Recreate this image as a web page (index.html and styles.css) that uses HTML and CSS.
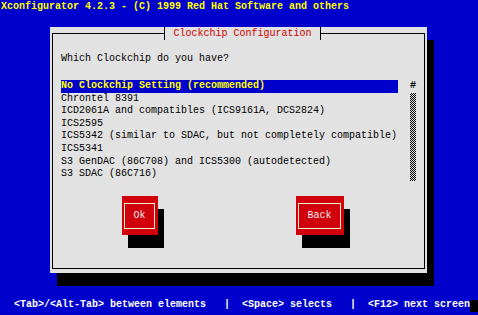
FILE: index.html
```html
<!DOCTYPE html>
<html lang="en">
<head>
  <meta charset="UTF-8" />
  <meta name="viewport" content="width=device-width, initial-scale=1.0"/>
  <title>Xconfigurator</title>
  <link rel="stylesheet" href="styles.css">
</head>
<body>
<header class="topline">Xconfigurator 4.2.3 - (C) 1999 Red Hat Software and others</header>

<div class="dialog">
  <fieldset class="frame">
    <legend>Clockchip Configuration</legend>
    <p class="question">Which Clockchip do you have?</p>
    <div class="listbox">
      <ul class="items">
        <li class="current">No Clockchip Setting (recommended)</li>
        <li>Chrontel 8391</li>
        <li>ICD2061A and compatibles (ICS9161A, DCS2824)</li>
        <li>ICS2595</li>
        <li>ICS5342 (similar to SDAC, but not completely compatible)</li>
        <li>ICS5341</li>
        <li>S3 GenDAC (86C708) and ICS5300 (autodetected)</li>
        <li>S3 SDAC (86C716)</li>
      </ul>
      <div class="scroll">
        <span class="thumb">#</span>
        <div class="track"></div>
      </div>
    </div>
    <div class="buttons">
      <button class="btn ok"><span>Ok</span></button>
      <button class="btn back"><span>Back</span></button>
    </div>
  </fieldset>
</div>

<footer class="helpline">&lt;Tab&gt;/&lt;Alt-Tab&gt; between elements   |  &lt;Space&gt; selects   |  &lt;F12&gt; next screen<span class="cursor"></span></footer>
</body>
</html>
```

FILE: styles.css
```css
html, body { margin: 0; }
body { width: 478px; height: 315px; overflow: hidden; background: #0000cc; font-family: "Liberation Mono", "DejaVu Sans Mono", monospace; font-size: 10px; line-height: 12.6px; display: flex; flex-direction: column; }

.topline { height: 13px; line-height: 13px; padding-left: 1px; color: #ffff00; font-weight: bold; white-space: pre; }

.dialog { width: 373px; height: 242px; margin: 14px 0 0 50px; padding: 0 2px 4px; background: #e2e2e2; box-shadow: 7px 13px 0 #000; }
.frame { box-sizing: border-box; height: 100%; min-width: 0; margin: 0; padding: 13px 0 0 8px; border: 1px solid #000; }
.frame legend { margin: 0 auto; padding: 0 8px; height: 13px; line-height: 13px; border-left: 1px solid #000; border-right: 1px solid #000; color: #d00000; white-space: pre; }

.question { margin: 0 0 14.4px; white-space: pre; color: #000; }

.listbox { display: flex; gap: 12px; }
.items { list-style: none; margin: 0; padding: 0; width: 337px; color: #000; }
.items li { height: 12.6px; white-space: pre; }
.items .current { background: #0000cc; color: #ffff00; font-weight: bold; }
.scroll { width: 6px; display: flex; flex-direction: column; }
.thumb { height: 12.6px; font-weight: bold; color: #000; }
.track { height: 88.2px; background: repeating-conic-gradient(#000 0 25%, #e2e2e2 0 50%) 0 0 / 2px 2px; }

.buttons { display: flex; gap: 138px; margin: 15.2px 0 0 61px; }
.btn { height: 39px; padding: 7px 3px 6px 2px; border: 0; background: #d0000c; box-shadow: 6px 13px 0 #000; font: inherit; color: #ececec; }
.btn span { box-sizing: border-box; display: flex; height: 100%; align-items: center; justify-content: center; border: 1px solid #f0f0c8; }
.ok { width: 36px; }
.back { width: 48px; }

.helpline { margin-top: auto; padding: 0 0 3px 14px; color: #fff; font-weight: bold; white-space: pre; display: flex; align-items: center; }
.cursor { width: 8px; height: 12px; background: #000; }
```
